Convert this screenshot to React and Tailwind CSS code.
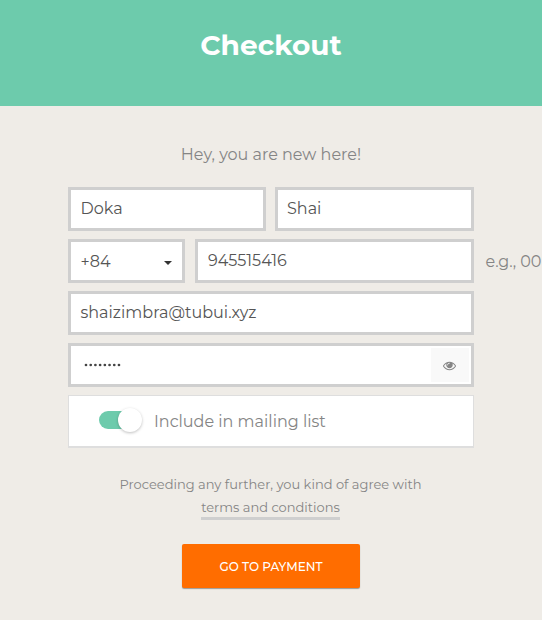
const field = "flex h-11 items-center border-[3px] border-[#cfcfcf] bg-white text-[#555]";

function Field({ className = "", children }) {
  return <div className={`${field} ${className}`}>{children}</div>;
}

function Eye() {
  return (
    <svg width="13" height="13" viewBox="0 0 1792 1792" fill="#858585">
      <path d="M1664 960q-152-236-381-353 61 104 61 225 0 185-131.5 316.5t-316.5 131.5-316.5-131.5-131.5-316.5q0-121 61-225-229 117-381 353 133 205 333.5 326.5t434.5 121.5 434.5-121.5 333.5-326.5zm-720-384q0-20-14-34t-34-14q-125 0-214.5 89.5t-89.5 214.5q0 20 14 34t34 14 34-14 14-34q0-86 61-147t147-61q20 0 34-14t14-34zm848 384q0 34-20 69-140 230-376.5 368.5t-499.5 138.5-499.5-139-376.5-368q-20-35-20-69t20-69q140-229 376.5-368t499.5-139 499.5 139 376.5 368q20 35 20 69z" />
    </svg>
  );
}

function Bullets() {
  return (
    <svg width="38" height="4" viewBox="0 0 38 4" fill="#444">
      {Array.from({ length: 8 }, (_, i) => (
        <circle key={i} cx={2 + i * 4.71} cy="2" r="1.35" />
      ))}
    </svg>
  );
}

export default function App() {
  return (
    <div className="h-[620px] w-[542px] overflow-hidden bg-[#efece7] font-['Montserrat','Inter',sans-serif] text-[16px] font-normal text-[#858585]">
      <header className="flex h-[106px] justify-center bg-[#6dcbac] pt-[25px]">
        <h1 className="text-[28px] leading-[40px] font-bold whitespace-nowrap text-white">Checkout</h1>
      </header>
      <main className="flex flex-col pt-[37px]">
        <p className="text-center leading-6 whitespace-nowrap">
          <span>Hey, you are new here!</span>
        </p>
        <form className="mt-5 ml-[68px] flex w-[406px] flex-col gap-2">
          <div className="flex gap-[9px]">
            <Field className="w-[198px] pl-[9.5px]">Doka</Field>
            <Field className="w-[199px] pl-[9px]">Shai</Field>
          </div>
          <div className="flex w-[474px] items-center">
            <Field className="w-[117px] shrink-0 justify-between pt-px pr-[10px] pl-[9.5px]">
              <span>+84</span>
              <svg className="mt-[3px]" width="8" height="4" viewBox="0 0 8 4" fill="#333">
                <path d="M0 0H8L4 4Z" />
              </svg>
            </Field>
            <Field className="ml-[10px] w-[279px] shrink-0 pl-[10px]">945515416</Field>
            <span className="ml-[11.5px] shrink-0 pt-0.5 whitespace-nowrap">e.g., 00</span>
          </div>
          <Field className="pl-[9.5px]">shaizimbra@tubui.xyz</Field>
          <Field className="justify-between pr-[2px] pl-[13px]">
            <Bullets />
            <span className="flex h-[34px] w-[38px] items-center justify-center bg-[#f9f9f9] pr-px">
              <Eye />
            </span>
          </Field>
          <label className="flex h-[53px] items-center border border-b-2 border-[#dedede] bg-white pl-[30px]">
            <span className="mb-[2px] flex h-[18px] w-[43px] items-center justify-end rounded-full bg-linear-to-r from-[#6dcbac] from-75% to-transparent to-75%">
              <span className="size-6 shrink-0 rounded-full bg-white shadow-[0_1px_3px_rgba(0,0,0,0.25)]" />
            </span>
            <span className="ml-3 pt-0.5">Include in mailing list</span>
          </label>
        </form>
        <p className="mt-[25px] mr-px flex flex-col items-center text-[13px] leading-[23px] font-normal">
          <span>Proceeding any further, you kind of agree with</span>
          <a className="h-[24px] border-b-[3px] border-[#cfcfcf]">terms and conditions</a>
        </p>
        <button className="mt-6 h-11 w-[178px] self-center rounded-[2px] bg-[#ff6d00] pt-0.5 text-[12px] font-medium text-white shadow-[0_1px_1px_rgba(0,0,0,0.35)]">
          GO TO PAYMENT
        </button>
      </main>
    </div>
  );
}
